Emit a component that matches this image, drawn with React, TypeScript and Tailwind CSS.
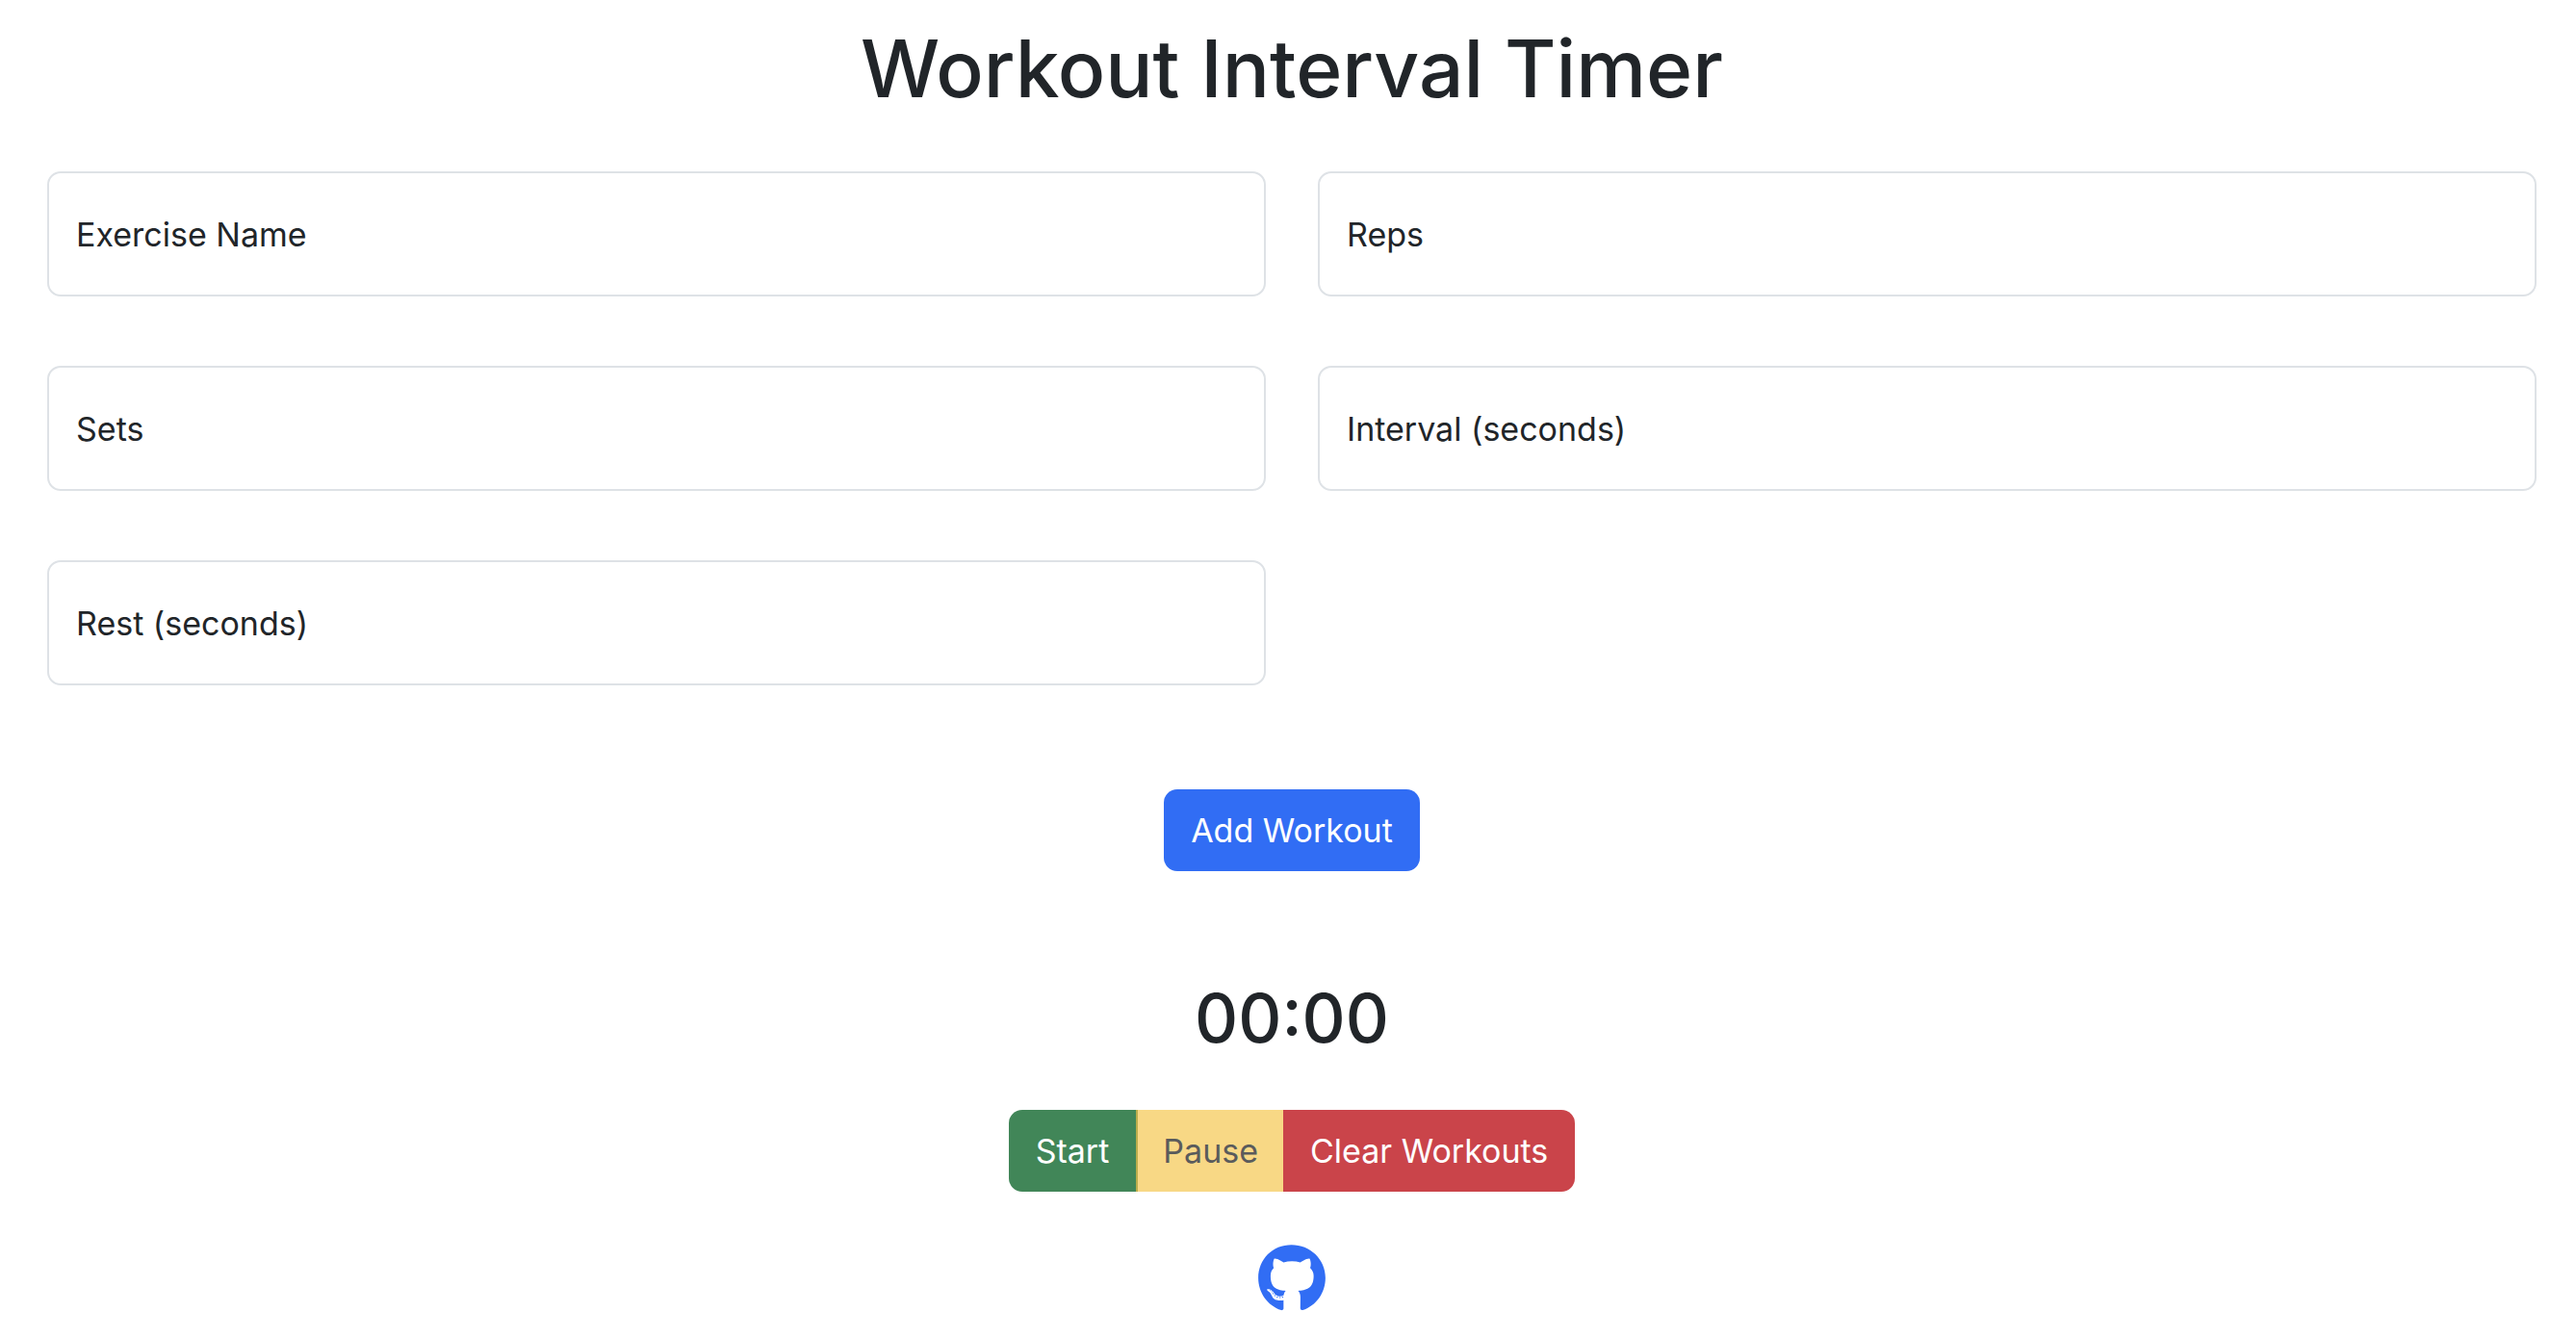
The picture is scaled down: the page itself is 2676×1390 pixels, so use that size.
import { useEffect, useState } from "react";
import { FaGithub } from "react-icons/fa";

const fields = [
  { id: "exercise", label: "Exercise Name", type: "text" },
  { id: "reps", label: "Reps", type: "number" },
  { id: "sets", label: "Sets", type: "number" },
  { id: "interval", label: "Interval (seconds)", type: "number" },
  { id: "rest", label: "Rest (seconds)", type: "number" },
];

function Field({ id, label, type }: { id: string; label: string; type: string }) {
  return (
    <div className="relative">
      <input
        id={id}
        name={id}
        type={type}
        placeholder=" "
        className="peer block h-[130px] w-full rounded-[14px] border-2 border-[#dee2e6] bg-white px-7 pt-10 text-[34px] outline-none focus:border-[#86b7fe]"
      />
      <label
        htmlFor={id}
        className="pointer-events-none absolute inset-y-0 left-0 flex items-center border-2 border-transparent px-7 text-[34px] peer-focus:items-start peer-focus:pt-2 peer-focus:text-2xl peer-[:not(:placeholder-shown)]:items-start peer-[:not(:placeholder-shown)]:pt-2 peer-[:not(:placeholder-shown)]:text-2xl"
      >
        {label}
      </label>
    </div>
  );
}

export default function App() {
  const [seconds, setSeconds] = useState(0);
  const [running, setRunning] = useState(false);

  useEffect(() => {
    if (!running) return;
    const timer = setInterval(() => setSeconds((s) => s + 1), 1000);
    return () => clearInterval(timer);
  }, [running]);

  const minutesText = String(Math.floor(seconds / 60)).padStart(2, "0");
  const secondsText = String(seconds % 60).padStart(2, "0");

  return (
    <main className="flex flex-col items-center bg-white pt-[18px] pr-[41px] pl-[49px] font-['Inter',sans-serif] text-[#212529]">
      <h1 className="text-[82px] leading-[108px] font-medium">Workout Interval Timer</h1>
      <form className="mt-[52px] flex w-full flex-col items-center" onSubmit={(e) => e.preventDefault()}>
        <div className="grid w-full grid-cols-2 gap-x-[54px] gap-y-[72px]">
          {fields.map((field) => (
            <Field key={field.id} {...field} />
          ))}
        </div>
        <button type="submit" className="mt-[108px] h-[85px] rounded-[14px] bg-[#316df4] px-7 text-[34px] text-white">
          Add Workout
        </button>
      </form>
      <h2 className="mt-[110px] text-[70px] leading-[86px] font-medium">
        {minutesText}:{secondsText}
      </h2>
      <div className="mt-[52px] flex h-[85px] overflow-hidden rounded-[14px] text-[34px]">
        <button type="button" className="bg-[#418658] px-7 text-white" onClick={() => setRunning(true)}>
          Start
        </button>
        <button
          type="button"
          disabled={!running}
          className="border-l-2 border-[#bcae4d] bg-[#f8d885] px-[26px] text-[#5a5b5c]"
          onClick={() => setRunning(false)}
        >
          Pause
        </button>
        <button
          type="button"
          className="bg-[#ca444a] px-7 text-white"
          onClick={() => {
            setRunning(false);
            setSeconds(0);
          }}
        >
          Clear Workouts
        </button>
      </div>
      <a href="https://github.com" aria-label="GitHub" className="mt-[54px] text-[#316df4]">
        <FaGithub className="size-[72px]" />
      </a>
    </main>
  );
}
